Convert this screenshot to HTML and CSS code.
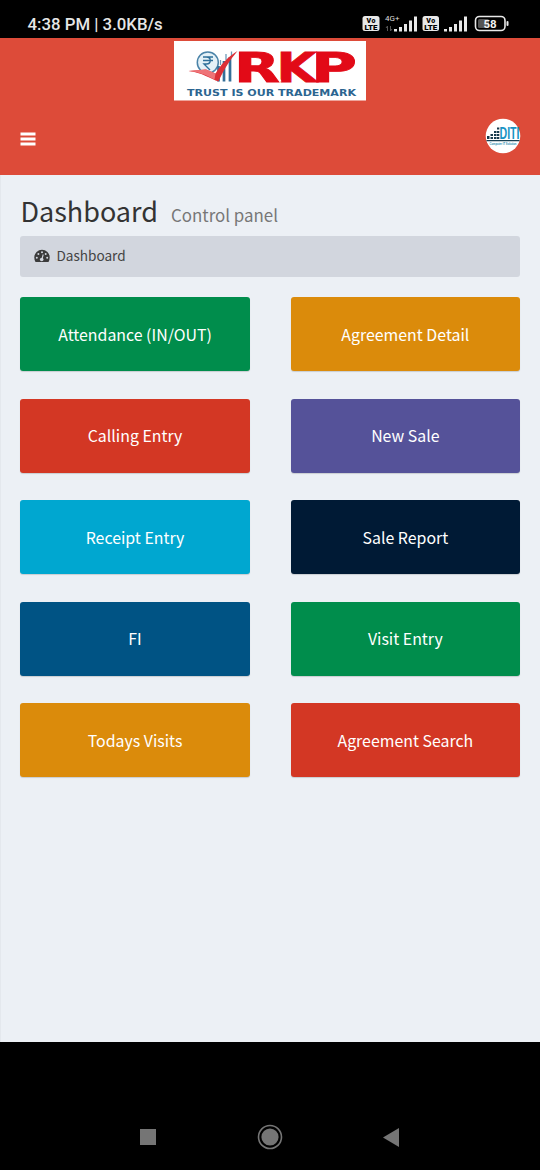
FILE: index.html
```html
<!DOCTYPE html>
<html lang="en">
<head>
  <meta charset="UTF-8">
  <meta name="viewport" content="width=device-width, initial-scale=1.0">
  <title>RKP | Dashboard</title>
  <link rel="stylesheet" href="styles.css">
</head>
<body>
<div class="screen">

  <!-- Status bar -->
  <div class="status-bar">
    <span class="clock">4:38 PM | 3.0KB/s</span>
    <svg class="status-icons" width="148" height="20" viewBox="362 14 148 20">
      <g fill="#e8e8e8">
        <rect x="362.500" y="16" width="17" height="15" rx="2.500"/>
        <rect x="422.500" y="16" width="16.500" height="15" rx="2.500"/>
        <path d="M394 29h3v2.500h-3zM399 27h3v4.500h-3zM404 24h3v7.500h-3zM409 20.500h3v11h-3zM414 16.500h3v15h-3z"/>
        <path d="M444 29h3v2.500h-3zM449 27h3v4.500h-3zM454 24h3v7.500h-3zM459 20.500h3v11h-3zM464 16.500h3v15h-3z"/>
        <rect x="506.500" y="21" width="2" height="5" rx="1"/>
      </g>
      <g class="volte">
        <text x="371" y="23.300" textLength="9">Vo</text>
        <text x="371" y="29.700" textLength="13" lengthAdjust="spacingAndGlyphs">LTE</text>
        <text x="430.800" y="23.300" textLength="9">Vo</text>
        <text x="430.800" y="29.700" textLength="13" lengthAdjust="spacingAndGlyphs">LTE</text>
      </g>
      <text class="net" x="385" y="21.200" textLength="14.500" lengthAdjust="spacingAndGlyphs">4G+</text>
      <path d="M387.500 31v-5l-1.500 2M390.500 26v5l1.500-2" stroke="#555" fill="none"/>
      <rect x="475.500" y="16.500" width="29.500" height="14" rx="4" fill="none" stroke="#e8e8e8" stroke-width="1.600"/>
      <rect x="478" y="19" width="11" height="9" rx="1.500" fill="#555"/>
      <text class="battery" x="490" y="27.800">58</text>
    </svg>
  </div>

  <!-- Header -->
  <header class="main-header">
    <a href="#" class="logo">
      <svg width="192" height="60" viewBox="174 41 192 60">
        <rect x="174" y="41" width="192.500" height="59.500" fill="#fff"/>
        <circle cx="207.800" cy="62.500" r="10.500" fill="#e4f1f7" stroke="#4a83a8" stroke-width="1.500"/>
        <path d="M203 57h10M203 60.500h10M204 57h2.500c5 0 5 7 0 7H204l6 6" fill="none" stroke="#2e6f99" stroke-width="1.400"/>
        <path d="M218.500 66v15.500M224 61v20.500M230 57v24.500" stroke="#346f98" stroke-width="2.700"/>
        <path d="M220.500 60v5M226 54v6M231.500 51.500v5" stroke="#6d9bb8" stroke-width="1.300"/>
        <path d="M188.500 71l17.500-1.500 9.500 4C222 63 229 56 237.500 51 230 60 224 69 218.500 81.500 211 79 202 72.500 188.500 71z" fill="#dc2f36"/>
        <path d="M188.500 71l17.500-1.500 9.500 4-1 6C206 75 199 72 188.500 71z" fill="#ee7377"/>
        <g class="logo-name">
          <text x="234" y="81.500" textLength="46" lengthAdjust="spacingAndGlyphs">R</text>
          <text x="276.500" y="81.500" textLength="40" lengthAdjust="spacingAndGlyphs">K</text>
          <text x="311" y="81.500" textLength="46" lengthAdjust="spacingAndGlyphs">P</text>
        </g>
        <path d="M272 51q7.500 3 7.500 9.500t-5.500 9l7 12" fill="none" stroke="#fff" stroke-width="1.100"/>
        <text class="logo-tag" x="187" y="96" textLength="169" lengthAdjust="spacingAndGlyphs">TRUST IS OUR TRADEMARK</text>
      </svg>
    </a>
    <nav class="navbar">
      <a href="#" class="sidebar-toggle">
        <svg width="16" height="14" viewBox="0 0 16 14">
          <path d="M0.500 2h15M0.500 7h15M0.500 12h15" stroke="#fff" stroke-width="2.800"/>
        </svg>
      </a>
      <a href="#" class="user-image">
        <svg width="36" height="36" viewBox="0 0 36 36">
          <circle cx="18" cy="18" r="17.300" fill="#fff"/>
          <path d="M2 18h2.500v3H2zM5.500 16h2.500v2H5.500zM5.500 19h2.500v2H5.500zM9 13h2.500v2H9zM9 16h2.500v2H9zM9 19h2.500v2H9zM12 9.500h2.300v2H12zM12 13h2.300v2H12zM12 16h2.300v2H12zM12 19h2.300v2H12z" fill="#183a4c"/>
          <text class="user-name" x="14.500" y="21" textLength="20" lengthAdjust="spacingAndGlyphs">DITI</text>
          <path d="M1.500 22.600h33" stroke="#173f52" stroke-width="1.300"/>
          <text class="user-tag" x="4.500" y="27.300" textLength="27" lengthAdjust="spacingAndGlyphs">Computer IT Solution</text>
        </svg>
      </a>
    </nav>
  </header>

  <!-- Content -->
  <main class="content-wrapper">
    <h1>Dashboard <small>Control panel</small></h1>
    <div class="breadcrumb">
      <svg width="16" height="14" viewBox="0 0 16 14">
        <path d="M8 .7A7.700 7.700 0 0 0 .3 8.400c0 1.700.4 3.200 1.200 4.600h13c.8-1.400 1.200-2.900 1.200-4.600A7.700 7.700 0 0 0 8 .7z" fill="#3b3b3b"/>
        <g fill="#d2d6de">
          <circle cx="2.800" cy="8.700" r="1"/>
          <circle cx="4.400" cy="5" r="1"/>
          <circle cx="8" cy="3.300" r="1"/>
          <circle cx="11.700" cy="5" r="1"/>
          <circle cx="13.200" cy="8.700" r="1"/>
          <circle cx="7.700" cy="10.500" r="1.800"/>
        </g>
        <path d="M7.900 10.500l1.300-5" stroke="#d2d6de" stroke-width="1.100"/>
      </svg>
      <a href="#">Dashboard</a>
    </div>
    <div class="row">
      <a href="#" class="box green">Attendance (IN/OUT)</a>
      <a href="#" class="box yellow">Agreement Detail</a>
      <a href="#" class="box red">Calling Entry</a>
      <a href="#" class="box purple">New Sale</a>
      <a href="#" class="box aqua">Receipt Entry</a>
      <a href="#" class="box navy">Sale Report</a>
      <a href="#" class="box blue">FI</a>
      <a href="#" class="box green">Visit Entry</a>
      <a href="#" class="box yellow">Todays Visits</a>
      <a href="#" class="box red">Agreement Search</a>
    </div>
  </main>

  <!-- Phone navigation -->
  <div class="phone-nav">
    <svg width="16" height="16"><rect width="16" height="16" fill="#757575"/></svg>
    <svg width="26" height="26" viewBox="0 0 26 26">
      <circle cx="13" cy="13" r="11.500" fill="none" stroke="#757575" stroke-width="1.600"/>
      <circle cx="13" cy="13" r="8.600" fill="#757575"/>
    </svg>
    <svg width="16" height="19" viewBox="0 0 16 19"><path d="M0 9.500L16 0v19z" fill="#757575"/></svg>
  </div>

</div>
</body>
</html>
```
FILE: styles.css
```css
* {
  margin: 0;
  padding: 0;
  box-sizing: border-box;
}

body {
  font-family: "Noto Sans CJK SC", "Noto Sans", sans-serif;
  background-color: #000;
}

a {
  text-decoration: none;
}

svg {
  display: block;
}

.screen {
  width: 540px;
  height: 1170px;
  display: flex;
  flex-direction: column;
}

/* Status bar */
.status-bar {
  height: 38px;
  padding: 10px 30px 0 27.5px;
  display: flex;
  justify-content: space-between;
}

.clock {
  font-family: Roboto, sans-serif;
  font-size: 16.8px;
  font-weight: 500;
  line-height: 28px;
  color: #e6e6e6;
}

.status-icons {
  margin-top: 4px;
}

.volte text {
  font: 900 7px Roboto, sans-serif;
  text-anchor: middle;
  fill: #000;
}

.net {
  font: 8px Roboto, sans-serif;
  fill: #ddd;
}

.battery {
  font: 700 11.5px Roboto, sans-serif;
  text-anchor: middle;
  fill: #f2f2f2;
}

/* Header */
.main-header {
  height: 137.4px;
  padding-top: 3px;
  background-color: #dd4b39;
}

.logo svg {
  margin: 0 auto;
}

.logo-name {
  font: 700 41px "DejaVu Sans", sans-serif;
  fill: #e20a17;
  stroke: #e20a17;
  stroke-width: 0.8px;
}

.logo-tag {
  font: 700 8.5px "DejaVu Sans", sans-serif;
  fill: #2c6590;
}

.navbar {
  height: 74px;
  padding: 0 19px 0 20px;
  display: flex;
  justify-content: space-between;
  align-items: center;
}

.sidebar-toggle {
  margin-top: 1px;
}

.user-image {
  margin-top: -5px;
}

.user-name {
  font: 700 17px "Liberation Sans", sans-serif;
  fill: #1793c4;
}

.user-tag {
  font: 700 4px "Liberation Sans", sans-serif;
  fill: #2b8db0;
}

/* Content */
.content-wrapper {
  height: 867px;
  padding: 18px 20px 0 19.4px;
  background-color: #ecf0f5;
  border-left: 1px solid #e4e8ed;
}

h1 {
  height: 42.5px;
  line-height: 36px;
  font-size: 27px;
  font-weight: 400;
  color: #333;
}

h1 small {
  margin-left: 7px;
  font-size: 16.9px;
  color: #777;
}

.breadcrumb {
  height: 41px;
  padding: 0 13.5px;
  display: flex;
  align-items: center;
  gap: 6.5px;
  background-color: #d2d6de;
  border-radius: 3px;
}

.breadcrumb a {
  padding-bottom: 3px;
  font-size: 13.6px;
  line-height: 38px;
  color: #444;
}

.breadcrumb svg {
  margin-top: -1px;
}

.row {
  margin-top: 20.3px;
  display: grid;
  grid-template-columns: 1fr 1fr;
  gap: 27.5px 41px;
}

.box {
  height: 74px;
  display: flex;
  justify-content: center;
  align-items: center;
  border-radius: 3px;
  box-shadow: 0 1px 1px rgba(0, 0, 0, 0.15);
  font-size: 15.9px;
  color: #fff;
}

.green { background-color: #008d4c; }
.yellow { background-color: #db8b0b; }
.red { background-color: #d33724; }
.purple { background-color: #555299; }
.aqua { background-color: #00a7d0; }
.navy { background-color: #001a35; }
.blue { background-color: #005384; }

/* Phone navigation */
.phone-nav {
  flex: 1;
  padding: 62px 141px 0 140px;
  display: flex;
  justify-content: space-between;
  align-items: center;
}
```
